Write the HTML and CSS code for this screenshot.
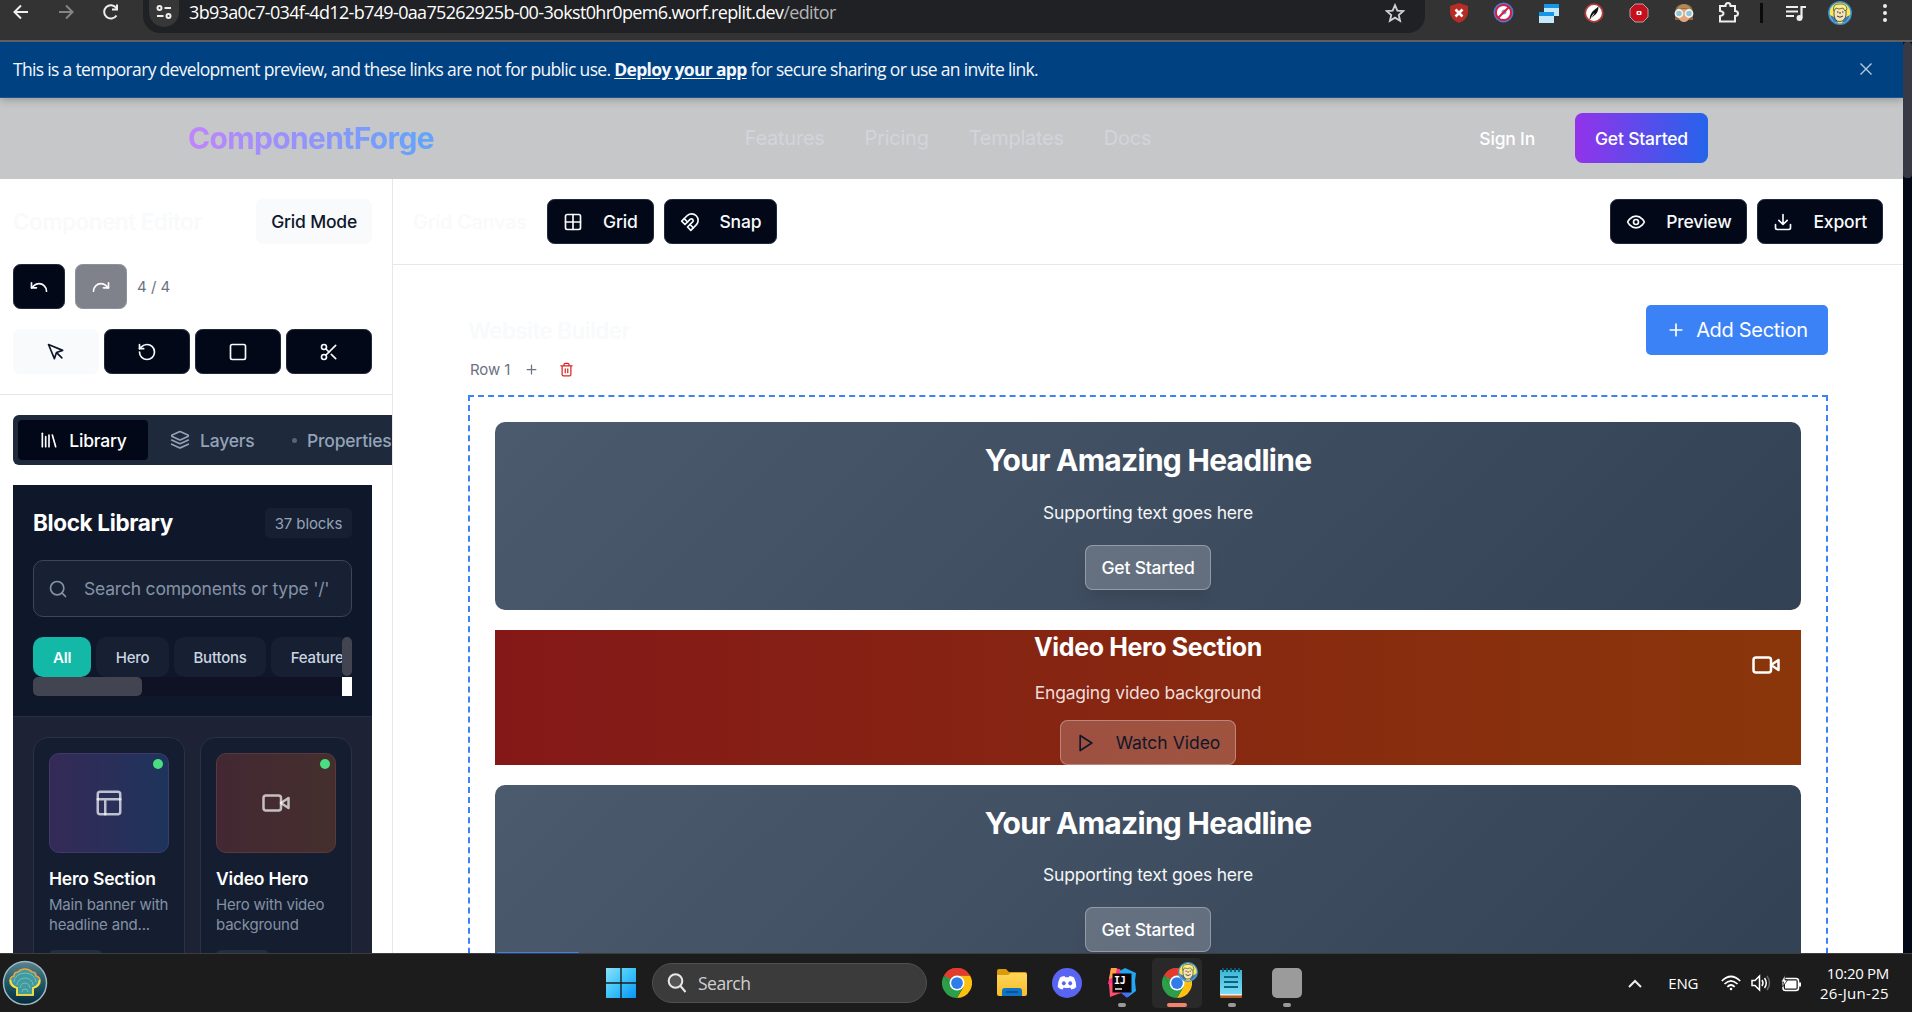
FILE: index.html
```html
<!DOCTYPE html>
<html lang="en">
<head>
<meta charset="utf-8">
<title>ComponentForge Editor</title>
<link rel="stylesheet" href="styles.css">
</head>
<body>
<svg width="0" height="0" class="defs">
  <defs>
    <linearGradient id="win" x1="0" y1="0" x2="1" y2="1"><stop offset="0" stop-color="#8be0fb"/><stop offset=".5" stop-color="#3cc3fa"/><stop offset="1" stop-color="#0a94f5"/></linearGradient>
    <linearGradient id="fold" x1="0" y1="0" x2="0" y2="1"><stop offset="0" stop-color="#ffd65c"/><stop offset="1" stop-color="#f9bc26"/></linearGradient>
    <linearGradient id="note" x1="0" y1="0" x2="0" y2="1"><stop offset="0" stop-color="#3fb4d3"/><stop offset="1" stop-color="#7adcf5"/></linearGradient>
    <linearGradient id="orb" x1="0" y1="0" x2="0" y2="1"><stop offset="0" stop-color="#5c8290"/><stop offset=".5" stop-color="#1e5a66"/><stop offset="1" stop-color="#08283c"/></linearGradient>
    <symbol id="chrome" viewBox="0 0 48 48">
      <path d="M24 24 3.2 12A24 24 0 0 1 44.8 12H24z" fill="#e33b2e"/>
      <path d="M24 24 44.8 12A24 24 0 0 1 24 48L34.4 30z" fill="#fdc010"/>
      <path d="M24 24 13.6 30 3.2 12A24 24 0 0 0 24 48L34.4 30z" fill="#2c9f48"/>
      <path d="M24 12H44.8L34.4 30z" fill="#fdc010"/>
      <path d="M3.2 12 13.6 30 24 24V12z" fill="#2c9f48"/>
      <path d="M3.2 12A24 24 0 0 1 44.8 12H24a12 12 0 0 0-10 6z" fill="#e33b2e"/>
      <circle cx="24" cy="24" r="12" fill="#fff"/><circle cx="24" cy="24" r="9.4" fill="#2f7de9"/>
    </symbol>
    <symbol id="avatar" viewBox="0 0 24 24">
      <circle cx="12" cy="12" r="11.2" fill="#f3e95b" stroke="#3b8fd6" stroke-width="1.5"/>
      <path d="M2 14q2 7 8 8l-2-5zM22 14q-2 7-8 8l2-5z" fill="#3579c4"/>
      <path d="M6 8q1-4 6-4t6 4v6q-1 6-6 6.500T6 14z" fill="#f4e3b4" stroke="#3f3a24" stroke-width=".8"/>
      <path d="M6 10q-2-7 5-7 7-1 8 5l-2 2-2-3-4 1-3-1z" fill="#f7ef8a" stroke="#5a522b" stroke-width=".8"/>
      <path d="M9 11h1.500M14 11h1.500M9 15q3 2.500 6 0M12 11v2" stroke="#3f3a24" fill="none"/>
    </symbol>
  </defs>
</svg>

<header class="browser">
  <div class="nav-icons">
    <svg width="18" height="18" viewBox="0 0 18 18" class="ln"><path d="M16 9H3M9 2.500 2.500 9 9 15.500"/></svg>
    <svg width="18" height="18" viewBox="0 0 18 18" class="ln dim"><path d="M2 9h13M9 2.500 15.500 9 9 15.500"/></svg>
    <svg width="18" height="18" viewBox="0 0 18 18" class="ln"><path d="M14.500 12.500A6.700 6.700 0 1 1 14.300 5M15 1.500v5h-5"/></svg>
  </div>
  <div class="omnibox">
    <span class="site"><svg width="16" height="16" viewBox="0 0 16 16" class="ln"><circle cx="3.500" cy="4" r="2"/><path d="M8.500 4H15M1 12h6.500"/><circle cx="12.500" cy="12" r="2"/></svg></span>
    <span class="url">3b93a0c7-034f-4d12-b749-0aa75262925b-00-3okst0hr0pem6.worf.replit.dev<i>/editor</i></span>
    <svg class="star" width="20" height="20" viewBox="0 0 24 24" fill="none" stroke="#d0d0d0" stroke-width="2.200"><path d="m12 2.600 2.800 6.500 7 .6-5.300 4.700 1.600 6.900L12 17.600l-6.100 3.700 1.600-6.900L2.200 9.700l7-.6z"/></svg>
  </div>
  <div class="exts">
    <div class="ext"><svg width="20" height="20" viewBox="0 0 20 20"><path d="M10 0 19 3v7q-1 7-9 10Q2 17 1 10V3z" fill="#b82c26"/><path d="m6.500 6.500 7 7m0-7-7 7" stroke="#fff" stroke-width="2.600"/></svg></div>
    <div class="ext"><svg width="21" height="21" viewBox="0 0 21 21"><circle cx="10.500" cy="10.500" r="10" fill="#4d7bd6"/><circle cx="10.500" cy="10.500" r="7.600" fill="#fff" stroke="#d81b3f" stroke-width="2"/><circle cx="11" cy="10" r="2.500" fill="#7aa6e8"/><path d="m5 16 11-11" stroke="#d81b3f" stroke-width="2"/></svg></div>
    <div class="ext"><svg width="20" height="20" viewBox="0 0 20 20"><path d="M5 1h15v12H5z" fill="#c5e8fa"/><path d="M5 1h15v4H5z" fill="#1796e8"/><path d="M0 9h15v11H0z" fill="#c5e8fa"/><path d="M0 9h15v4H0z" fill="#1796e8"/></svg></div>
    <div class="ext"><svg width="20" height="20" viewBox="0 0 20 20"><circle cx="10" cy="10" r="8.800" fill="#fff" stroke="#b13a3a" stroke-width="1.800"/><path d="M14.500 3.500q0 5-3 8l-6 5Q6 11 9 8z" fill="#111"/><path d="m7 15 3-4.500" stroke="#ddd"/></svg></div>
    <div class="ext"><svg width="20" height="20" viewBox="0 0 20 20"><path d="M6 1h8l5 5v8l-5 5H6l-5-5V6z" fill="#c8101c" stroke="#a8a8a8"/><rect x="7.500" y="8" width="5" height="4" rx="1" fill="#fff"/><circle cx="10" cy="10" r="1" fill="#c8101c"/></svg></div>
    <div class="ext"><svg width="20" height="20" viewBox="0 0 20 20"><path d="M1 17V8q1-7 9-7t9 7v9z" fill="#8a6642"/><path d="M4 8q6-4 12 0v6q-2 5-6 5t-6-5z" fill="#e5a47b"/><path d="M2 8q3-7 8-7t8 7q-4-3-8-3T2 8z" fill="#b08a55"/><g fill="#8fc6d6" stroke="#f4f4f4" stroke-width="1.600"><circle cx="5" cy="10.500" r="3.600"/><circle cx="15" cy="10.500" r="3.600"/></g></svg></div>
    <div class="ext"><svg width="21" height="21" viewBox="0 0 21 21" fill="none" stroke="#eee" stroke-width="2"><path d="M2 4h5.500Q7.500 1 10 1t2.500 3H17v5q3 0 3 2.500T17 14v5.500H2V14q3.500-.5 3.500-2.500T2 9z"/></svg></div>
    <span class="bar"></span>
    <svg class="music" width="20" height="18" viewBox="0 0 20 18"><path d="M0 3h12M0 7.500h12M0 12h8" stroke="#eee" stroke-width="2"/><path d="M15.500 14V3H20" stroke="#eee" stroke-width="2.200" fill="none"/><circle cx="13.500" cy="14" r="3" fill="#eee"/></svg>
    <svg class="me" width="24" height="24"><use href="#avatar"/></svg>
    <svg class="dots" width="6" height="20" viewBox="0 0 6 20" fill="#eee"><circle cx="3" cy="3" r="2"/><circle cx="3" cy="10" r="2"/><circle cx="3" cy="17" r="2"/></svg>
  </div>
</header>

<div class="viewport">
<div class="page">
  <div class="notice">
    <p>This is a temporary development preview, and these links are not for public use. <b>Deploy your app</b> for secure sharing or use an invite link.</p>
    <svg width="12" height="12" viewBox="0 0 12 12" stroke="#b7c9dc" stroke-width="1.400"><path d="m.5.500 11 11m0-11-11 11"/></svg>
  </div>
  <div class="top">
    <div class="brand"><span class="logo">ComponentForge</span></div>
    <nav><a>Features</a><a>Pricing</a><a>Templates</a><a>Docs</a></nav>
    <div class="account"><span>Sign In</span><span class="cta">Get Started</span></div>
  </div>

  <div class="work">
    <aside>
      <section class="tools">
        <div class="row between"><h2 class="ghost">Component Editor</h2><span class="btn light">Grid Mode</span></div>
        <div class="row hist">
          <span class="btn sq"><svg class="ic" viewBox="0 0 24 24"><path d="M3 7v6h6"/><path d="M21 17a9 9 0 0 0-9-9 9 9 0 0 0-6 2.300L3 13"/></svg></span>
          <span class="btn sq off"><svg class="ic" viewBox="0 0 24 24"><path d="M21 7v6h-6"/><path d="M3 17a9 9 0 0 1 9-9 9 9 0 0 1 6 2.300l3 2.700"/></svg></span>
          <small>4 / 4</small>
        </div>
        <div class="grid4">
          <span class="btn light"><svg class="ic" viewBox="0 0 24 24"><path d="m3 3 7.070 16.970 2.510-7.390 7.390-2.510L3 3z"/><path d="m13 13 6 6"/></svg></span>
          <span class="btn"><svg class="ic" viewBox="0 0 24 24"><path d="M3 12a9 9 0 1 0 9-9 9.750 9.750 0 0 0-6.740 2.740L3 8"/><path d="M3 3v5h5"/></svg></span>
          <span class="btn"><svg class="ic" viewBox="0 0 24 24"><rect width="18" height="18" x="3" y="3" rx="2"/></svg></span>
          <span class="btn"><svg class="ic" viewBox="0 0 24 24"><circle cx="6" cy="6" r="3"/><path d="M8.120 8.120 12 12"/><path d="M20 4 8.120 15.880"/><circle cx="6" cy="18" r="3"/><path d="M14.800 14.800 20 20"/></svg></span>
        </div>
      </section>
      <div class="tabs">
        <span class="tab on"><svg class="ic" viewBox="0 0 24 24"><path d="m16 6 4 14"/><path d="M12 6v14"/><path d="M8 8v12"/><path d="M4 4v16"/></svg>Library</span>
        <span class="tab layers"><svg class="ic" viewBox="0 0 24 24"><path d="m12.830 2.180a2 2 0 0 0-1.660 0L2.600 6.080a1 1 0 0 0 0 1.830l8.580 3.910a2 2 0 0 0 1.660 0l8.580-3.900a1 1 0 0 0 0-1.830Z"/><path d="m22 12-9.170 4.160a2 2 0 0 1-1.660 0L2 12"/><path d="m22 17-9.170 4.160a2 2 0 0 1-1.660 0L2 17"/></svg>Layers</span>
        <span class="tab props"><i></i>Properties</span>
      </div>
      <section class="library">
        <div class="lib-head">
          <div class="row between"><h3>Block Library</h3><span class="count">37 blocks</span></div>
          <div class="search"><svg class="ic" viewBox="0 0 24 24"><circle cx="11" cy="11" r="8"/><path d="m21 21-4.300-4.300"/></svg>Search components or type '/'</div>
          <div class="cats">
            <div class="chips"><span class="on">All</span><span>Hero</span><span>Buttons</span><span>Features</span></div>
            <div class="vbar"></div>
            <div class="hbar"><i></i></div>
            <div class="corner"></div>
          </div>
        </div>
        <div class="cards">
          <article>
            <div class="thumb hero"><svg class="ic" viewBox="0 0 24 24"><rect width="18" height="18" x="3" y="3" rx="2"/><path d="M3 9h18M9 21V9"/></svg><i></i></div>
            <h4>Hero Section</h4><p>Main banner with<br>headline and...</p><span class="tag"></span>
          </article>
          <article>
            <div class="thumb video"><svg class="ic" viewBox="0 0 24 24"><path d="m22 8-6 4 6 4V8Z"/><rect width="14" height="12" x="2" y="6" rx="2"/></svg><i></i></div>
            <h4>Video Hero</h4><p>Hero with video<br>background</p><span class="tag"></span>
          </article>
        </div>
      </section>
    </aside>

    <main>
      <div class="toolbar">
        <span class="ghost name">Grid Canvas</span>
        <span class="btn wide"><svg class="ic" viewBox="0 0 24 24"><rect width="18" height="18" x="3" y="3" rx="2"/><path d="M3 12h18M12 3v18"/></svg>Grid</span>
        <span class="btn wide"><svg class="ic" viewBox="0 0 24 24"><path d="m6 15-4-4 6.750-6.770a7.790 7.790 0 0 1 11 11L13 22l-4-4 6.390-6.360a2.140 2.140 0 0 0-3-3L6 15"/><path d="m5 8 4 4M12 15l4 4"/></svg>Snap</span>
        <span class="fill"></span>
        <span class="btn wide"><svg class="ic" viewBox="0 0 24 24"><path d="M2 12s3-7 10-7 10 7 10 7-3 7-10 7-10-7-10-7Z"/><circle cx="12" cy="12" r="3"/></svg>Preview</span>
        <span class="btn wide"><svg class="ic" viewBox="0 0 24 24"><path d="M21 15v4a2 2 0 0 1-2 2H5a2 2 0 0 1-2-2v-4"/><path d="m7 10 5 5 5-5M12 15V3"/></svg>Export</span>
      </div>
      <div class="canvas">
        <div class="row between"><h2 class="ghost">Website Builder</h2><span class="add"><svg class="ic" viewBox="0 0 24 24"><path d="M5 12h14M12 5v14"/></svg>Add Section</span></div>
        <div class="rowhead"><span>Row 1</span>
          <svg class="ic sm" viewBox="0 0 24 24"><path d="M5 12h14M12 5v14"/></svg>
          <svg class="ic sm red" viewBox="0 0 24 24"><path d="M3 6h18M19 6v14c0 1-1 2-2 2H7c-1 0-2-1-2-2V6M8 6V4c0-1 1-2 2-2h4c1 0 2 1 2 2v2M10 11v6M14 11v6"/></svg>
        </div>
        <div class="drop">
          <div class="slate"><h1>Your Amazing Headline</h1><p>Supporting text goes here</p><span class="glass">Get Started</span></div>
          <div class="film"><h2>Video Hero Section</h2><p>Engaging video background</p><span class="glass watch"><svg class="ic" viewBox="0 0 24 24"><path d="m5 3 14 9-14 9V3z"/></svg>Watch Video</span>
            <svg class="ic cam" viewBox="0 0 24 24"><path d="m22 8-6 4 6 4V8Z"/><rect width="14" height="12" x="2" y="6" rx="2"/></svg></div>
          <div class="slate last"><h1>Your Amazing Headline</h1><p>Supporting text goes here</p><span class="glass">Get Started</span></div>
        </div>
      </div>
    </main>
  </div>
  <div class="status"></div>
</div>
<div class="scroll"><i></i></div>
</div>

<footer class="taskbar">
  <svg class="shell" width="46" height="46" viewBox="0 0 46 46"><circle cx="23" cy="23" r="21.500" fill="url(#orb)" stroke="#9db8c2" stroke-width="1.500"/><path d="M15 35v-7q-7-2-7-7 0-4 4-5 0-4 4-4 3-3 7-3t7 3q4 0 4 4 4 1 4 5 0 5-7 7v7z" fill="#3f9ba0" stroke="#f0a23c" stroke-width="1.700"/><path d="M8.500 20q0 6 6.500 8v7h16v-7q6.500-2 6.500-8" fill="none" stroke="#f5e645" stroke-width="1.700"/><path d="M12 22a11 9 0 0 1 22 0M15 25a8 7 0 0 1 16 0M18 28a5 5 0 0 1 10 0M20 32a3 3 0 0 1 6 0" stroke="#76bdbb" fill="none"/></svg>
  <div class="center">
    <svg class="win" width="30" height="30" viewBox="0 0 30 30"><path fill="url(#win)" d="M0 0h14.300v14.300H0zM15.700 0H30v14.300H15.700zM0 15.700h14.300V30H0zM15.700 15.700H30V30H15.700z"/></svg>
    <div class="find"><svg width="20" height="20" viewBox="0 0 20 20" fill="#555" stroke="#e8e8e8" stroke-width="2"><circle cx="8.500" cy="8" r="6.800"/><path d="m13.500 13 5 6"/></svg>Search</div>
    <span class="app"><svg width="30" height="30"><use href="#chrome"/></svg></span>
    <span class="app"><svg width="30" height="28" viewBox="0 0 30 28"><path d="M0 2q0-2 2-2h7l3 3h16q2 0 2 2v5H0z" fill="#d99a0b"/><path d="M0 6h11l3-2h14q2 0 2 2v19q0 2-2 2H2q-2 0-2-2z" fill="url(#fold)"/><path d="M5 27v-5q0-3 3-3h14q3 0 3 3v5z" fill="#0f74c4"/><path d="M9 23h12" stroke="#0a4a86" stroke-width="1.500"/></svg></span>
    <span class="app"><svg width="30" height="30" viewBox="0 0 30 30"><circle cx="15" cy="15" r="15" fill="#5865f2"/><path d="M10 8.500 12.500 8l.8 1.300h3.400l.8-1.300 2.500.5 2 1q2.500 5 2.300 9.500-2 2-4.800 2.500l-1.300-2q-3.200 1-6.400 0l-1.300 2Q7.700 21 5.700 19 5.500 14.500 8 9.500z" fill="#fff"/><ellipse cx="11.800" cy="15.300" rx="1.900" ry="2.100" fill="#5865f2"/><ellipse cx="18.200" cy="15.300" rx="1.900" ry="2.100" fill="#5865f2"/></svg></span>
    <span class="app run"><svg width="30" height="30" viewBox="0 0 30 30"><path d="m4 0 9 1 4 8-9 9-7-2 1-5z" fill="#ff318c"/><path d="M4 0h6l-2 9-6 2z" fill="#fda23c"/><path d="m13 3 5-3 11 5-1 8 1 10-8 6-7-6z" fill="#22a7f2"/><path d="m2 16 6-2 10 10-7 2-8 3z" fill="#fd4f6b"/><path d="m13 24h11l-4 6z" fill="#4a6cf0"/><rect x="5.500" y="5.500" width="19" height="19" fill="#0b0508"/><text x="7" y="15.500" class="ij">IJ</text><path d="M8 21h7" stroke="#fff" stroke-width="1.400"/></svg></span>
    <span class="app active"><svg width="30" height="30"><use href="#chrome"/></svg><svg class="who" width="20" height="20"><use href="#avatar"/></svg></span>
    <span class="app run"><svg width="23" height="30" viewBox="0 0 23 30"><rect y="25" width="22" height="5" rx="1" fill="#b35a1c"/><rect y="2" width="22" height="25.500" rx="1" fill="#eee"/><rect y="2" width="22" height="24" rx="1" fill="url(#note)"/><path d="M4 9h14M4 14h14M4 19h14" stroke="#0b6483" stroke-width="1.800"/><path d="M3 0v4M7 0v4M11 0v4M15 0v4M19 0v4" stroke="#0e5d78" stroke-width="1.800"/></svg></span>
    <span class="app run"><i class="blank"></i></span>
  </div>
  <div class="tray">
    <svg width="14" height="9" viewBox="0 0 14 9" class="ln"><path d="m1 8 6-6 6 6"/></svg>
    <span class="lang">ENG</span>
    <svg class="wifi" width="20" height="16" viewBox="0 0 20 16" fill="none" stroke="#fff" stroke-width="1.700"><path d="M.8 6Q10-3 19.200 6M3.500 9Q10 2.500 16.500 9M6.300 11.800q3.700-3.600 7.400 0"/><circle cx="10" cy="14" r="1.300" fill="#fff" stroke="none"/></svg>
    <svg class="vol" width="20" height="18" viewBox="0 0 20 18" fill="none" stroke="#fff" stroke-width="1.500"><path d="M1 6.500h3L8.500 2v14L4 11.500H1zM11 6q2 3 0 6M13.500 4q3.500 5 0 10"/><path d="M16 2q5 7 0 14" stroke="#666"/></svg>
    <svg class="bat" width="21" height="17" viewBox="0 0 21 17"><rect x="2" y="3.500" width="15.500" height="12" rx="2.500" fill="none" stroke="#fff" stroke-width="1.500"/><rect x="4" y="5.500" width="11.500" height="8" fill="#fff"/><path d="M18 7.500h2v4h-2z" fill="#fff"/><path d="M4 0 0 7h2.500l-1 5 5-7H4z" fill="#fff" stroke="#1c1c1c" stroke-width=".8"/></svg>
    <div class="clock"><span>10:20 PM</span><br><span class="date">26-Jun-25</span></div>
  </div>
</footer>
</body>
</html>
```
FILE: styles.css
```css
* { box-sizing: border-box; margin: 0; padding: 0; }
body { width: 1912px; height: 1012px; overflow: hidden; display: flex; flex-direction: column; background: #fff; font-family: Inter, sans-serif; font-size: 17.5px; letter-spacing: -.2px; }
.defs { position: absolute; }
svg { flex: none; display: block; }
.ic { width: 20px; height: 20px; fill: none; stroke: currentColor; stroke-width: 2; stroke-linecap: round; stroke-linejoin: round; }
.ln { fill: none; stroke: #eee; stroke-width: 2; }
.dim { stroke: #858585; }
.row { display: flex; align-items: center; }
.between { justify-content: space-between; }

.browser { height: 42px; flex: none; background: #333; border-bottom: 2px solid #5f5f5f; display: flex; align-items: flex-start; }
.nav-icons { display: flex; gap: 27px; padding: 3px 0 0 12px; width: 143px; }
.omnibox { width: 1282px; height: 33px; background: #202124; border-radius: 0 0 17px 17px; display: flex; align-items: flex-start; padding-left: 6px; }
.site { width: 30px; height: 27px; background: #373737; border-radius: 0 0 15px 15px; display: flex; justify-content: center; padding-top: 4px; }
.url { flex: 1; margin-left: 10px; font: 18px/25px "Open Sans", sans-serif; color: #fff; white-space: nowrap; letter-spacing: -0.66px; }
.url i { font-style: normal; color: #b4b4b4; }
.star { margin: 3px 20px 0 0; }
.exts { flex: 1; height: 25px; display: flex; align-items: center; padding-left: 11px; }
.ext { width: 45px; flex: none; display: flex; justify-content: center; }
.bar { width: 3px; height: 20px; margin-left: 9px; background: #0b0b0b; }
.music { margin-left: 23px; }
.me { margin-left: 22px; }
.dots { margin-left: 30px; }

.viewport { height: 911px; flex: none; display: flex; }
.page { width: 1903px; display: flex; flex-direction: column; overflow: hidden; position: relative; }
.scroll { flex: 1; background: #020817; }
.scroll i { display: block; height: 136px; background: #373a45; border-radius: 4px; }
.notice { height: 56px; flex: none; background: #004182; border-bottom: 1px solid #1a5492; box-shadow: 0 2px 8px rgba(0,0,0,.25); position: relative; display: flex; align-items: center; justify-content: space-between; padding: 0 31px 1px 13px; font-family: "Open Sans", sans-serif; color: #f4f8fc; letter-spacing: -0.675px; }
.notice b { text-decoration: underline; text-underline-offset: 2px; }
.top { height: 81px; flex: none; background: #c6c7c9; display: flex; align-items: center; justify-content: space-between; padding: 0 195px 1px 188px; }
.brand { width: 520px; }
.logo { display: inline-block; padding-right: 1px; font-size: 30px; line-height: 38px; font-weight: 700; letter-spacing: -.65px; background: linear-gradient(90deg, #c084fc, #60a5fa); -webkit-background-clip: text; background-clip: text; color: transparent; }
nav { display: flex; gap: 40px; color: #d1d5db; font-size: 20px; letter-spacing: -.25px; }
.account { width: 520px; display: flex; justify-content: flex-end; align-items: center; gap: 40px; color: #fff; font-weight: 500; }
.cta { width: 133px; height: 50px; border-radius: 7.5px; display: flex; align-items: center; justify-content: center; background: linear-gradient(90deg, #9333ea, #2563eb); }

.work { flex: 1; display: flex; min-height: 0; }
aside { width: 393px; border-right: 1px solid #e5e7eb; overflow: hidden; display: flex; flex-direction: column; }
h2, h3 { font-size: 22.5px; line-height: 30px; font-weight: 700; }
.ghost { color: #f8fafc; }
.tools { padding: 20px 20px 20px 13px; height: 216px; flex: none; border-bottom: 1px solid #e5e7eb; display: flex; flex-direction: column; gap: 20px; }
.tools h2 { font-weight: 600; letter-spacing: -.5px; }
.btn { height: 45px; display: flex; align-items: center; justify-content: center; background: #020817; color: #f8fafc; border: 1px solid #1e293b; border-radius: 7.5px; font-weight: 500; }
.btn.light { background: #f8fafc; color: #0f172a; border-color: #f8fafc; padding: 0 14px; }
.hist { gap: 10px; }
.sq { width: 52px; }
.off { opacity: .5; }
.hist small { font-size: 15px; color: #6b7280; letter-spacing: 0; }
.grid4 { display: grid; grid-template-columns: repeat(4, 1fr); gap: 5px; }
.tabs { margin: 20px 0 20px 13px; width: 440px; height: 50px; flex: none; padding: 5px; border-radius: 6px; background: #1e293b; display: flex; color: #94a3b8; font-weight: 500; }
.tab { display: flex; align-items: center; gap: 10px; border-radius: 4px; flex: none; }
.tab.on { width: 130px; justify-content: center; gap: 10px; background: #020817; color: #fff; }
.layers { padding-left: 22px; width: 144px; }
.props i { width: 5px; height: 5px; border-radius: 50%; background: #56657a; }
.library { width: 359px; margin-left: 13px; flex: 1; background: #1e2235; color: #fff; }
.lib-head { height: 232px; padding: 23px 20px 20px; background: #0f172a; border-bottom: 1px solid #252d40; }
.lib-head h3 { letter-spacing: -.35px; }
.count { height: 30px; width: 87px; border-radius: 5px; background: #162032; color: #94a3b8; font-size: 15px; letter-spacing: -.1px; display: flex; align-items: center; justify-content: center; }
.search { margin-top: 22px; height: 57px; border: 1px solid #3b4759; border-radius: 10px; background: #172133; display: flex; align-items: center; padding-left: 14px; gap: 16px; color: #8592a6; white-space: nowrap; }
.cats { margin-top: 20px; display: grid; grid-template: 40px 19px / 309px 10px; }
.chips { display: flex; gap: 5px; overflow: hidden; }
.chips span { flex: none; height: 40px; padding: 0 19.500px; border-radius: 10px; background: #162032; color: #cbd5e1; font-size: 15px; font-weight: 500; display: flex; align-items: center; }
.chips .on { background: #14b8a6; color: #fff; font-weight: 600; padding: 0 20px; }
.vbar { background: #424551; border-radius: 5px; height: 39px; }
.hbar { background: #0f1225; }
.hbar i { display: block; width: 109px; height: 19px; border-radius: 5px; background: #424551; }
.corner { background: #fff; }
.cards { padding: 20px 20px 0; display: grid; grid-template-columns: 1fr 1fr; gap: 15px; }
article { height: 260px; padding: 15px; border: 1px solid #273244; border-radius: 15px; background: #141e30; }
.thumb { height: 100px; border-radius: 10px; display: flex; align-items: center; justify-content: center; position: relative; color: rgba(255,255,255,.7); }
.thumb .ic { width: 30px; height: 30px; }
.thumb i { position: absolute; right: 5px; top: 5px; width: 10px; height: 10px; border-radius: 50%; background: #4ade80; }
.hero { background: linear-gradient(90deg, #352a57, #1e345c); border: 1px solid #3f3a6b; }
.video { background: linear-gradient(90deg, #432833, #452f2d); border: 1px solid #59393d; }
h4 { margin-top: 15px; font-size: 17.5px; line-height: 22px; font-weight: 600; letter-spacing: -.2px; white-space: nowrap; }
article:first-child h4 { letter-spacing: -.2px; }
article p { margin-top: 5px; font-size: 15px; line-height: 20px; color: #8491a5; white-space: nowrap; }
.tag { display: block; width: 53px; height: 20px; margin-top: 15px; border-radius: 5px; background: #232e41; }

main { flex: 1; display: flex; flex-direction: column; }
.toolbar { height: 86px; flex: none; padding: 0 20px; border-bottom: 1px solid #e5e7eb; display: flex; align-items: center; gap: 10px; }
.name { width: 124px; font-size: 20px; font-weight: 500; letter-spacing: -.3px; }
.wide { gap: 20px; padding: 0 15px; }
.fill { flex: 1; }
.canvas { padding: 40px 75px 0; }
.add { width: 182px; height: 50px; border-radius: 5px; background: #3b82f6; color: #fff; font-size: 20px; letter-spacing: -.3px; display: flex; align-items: center; justify-content: center; gap: 10px; }
.canvas .row .ghost { font-weight: 600; letter-spacing: -.6px; padding-top: 2px; }
.rowhead { margin: 4px 0 16px; height: 20px; padding-left: 2px; display: flex; align-items: center; color: #6b7280; font-size: 15px; letter-spacing: -.1px; }
.sm { width: 15px; height: 15px; margin-left: 14px; }
.red { color: #dc2626; margin-left: 20px; }
.drop { height: 800px; border: 2px dashed #3b82f6; padding: 25px; display: flex; flex-direction: column; gap: 20px; }
.slate, .film { display: flex; flex-direction: column; align-items: center; color: #fff; flex: none; }
.slate { height: 188px; padding-top: 19px; border-radius: 10px; background: linear-gradient(135deg, #4b5a6c, #334155); }
h1 { font-size: 30px; line-height: 38px; font-weight: 700; letter-spacing: -.73px; }
.slate p { margin-top: 21px; line-height: 25px; color: #f4f6f8; }
.slate.last p { margin-top: 20px; }
.glass { height: 45px; margin-top: 20px; padding: 0 15px; border: 1px solid rgba(255,255,255,.3); border-radius: 7.5px; background: rgba(255,255,255,.2); font-weight: 500; display: flex; align-items: center; box-shadow: 0 10px 15px -3px rgba(0,0,0,.1); }
.film { height: 135px; position: relative; background: linear-gradient(90deg, #841818, #8a360a); }
.film h2 { font-size: 25px; line-height: 35px; letter-spacing: -.37px; }
.film p { margin-top: 15px; line-height: 25px; color: #f0dcd8; }
.film .glass { margin-top: 15px; box-shadow: none; }
.watch { color: #0f172a; gap: 20px; font-weight: 400; letter-spacing: 0; }
.cam { position: absolute; right: 20px; top: 20px; width: 30px; height: 30px; }
.status { position: absolute; left: 497px; bottom: 0; width: 82px; height: 1px; background: #3b82f6; border-radius: 2px 2px 0 0; }

.taskbar { flex: 1; background: #1c1c1c; border-top: 1px solid #3d3d3d; display: flex; align-items: center; color: #fff; font-family: "Open Sans", sans-serif; }
.shell { margin-left: 2px; }
.center { margin-left: 557.5px; display: flex; align-items: center; }
.find { width: 275px; height: 40px; margin: 0 2px 0 16.500px; border: 1px solid #505050; border-radius: 20px; background: #3b3b3b; display: flex; align-items: center; gap: 11px; padding-left: 14px; font-size: 17.5px; letter-spacing: -.5px; color: #d0d0d0; }
.app { width: 50px; height: 50px; margin: 0 2.5px; border-radius: 5px; display: flex; align-items: center; justify-content: center; position: relative; }
.active { background: #292929; }
.run::after, .active::after { content: ""; position: absolute; bottom: 1px; width: 8px; height: 4px; border-radius: 2px; background: #9a9a9a; }
.active::after { width: 20px; background: #f4836b; }
.who { position: absolute; right: 4px; top: 4px; }
.blank { width: 30px; height: 30px; border-radius: 5px; background: #9b9b9b; }
.ij { font: 700 10px "DejaVu Sans Mono", monospace; fill: #fff; }
.tray { margin-left: auto; display: flex; align-items: center; padding-right: 23px; }
.lang { margin: 0 23px 0 26px; font-size: 15px; letter-spacing: -.3px; }
.vol { margin-left: 10px; }
.bat { margin-left: 10px; }
.clock { width: 87px; text-align: right; font-size: 15px; line-height: 20px; letter-spacing: -.3px; }
.date { letter-spacing: .3px; }
```
